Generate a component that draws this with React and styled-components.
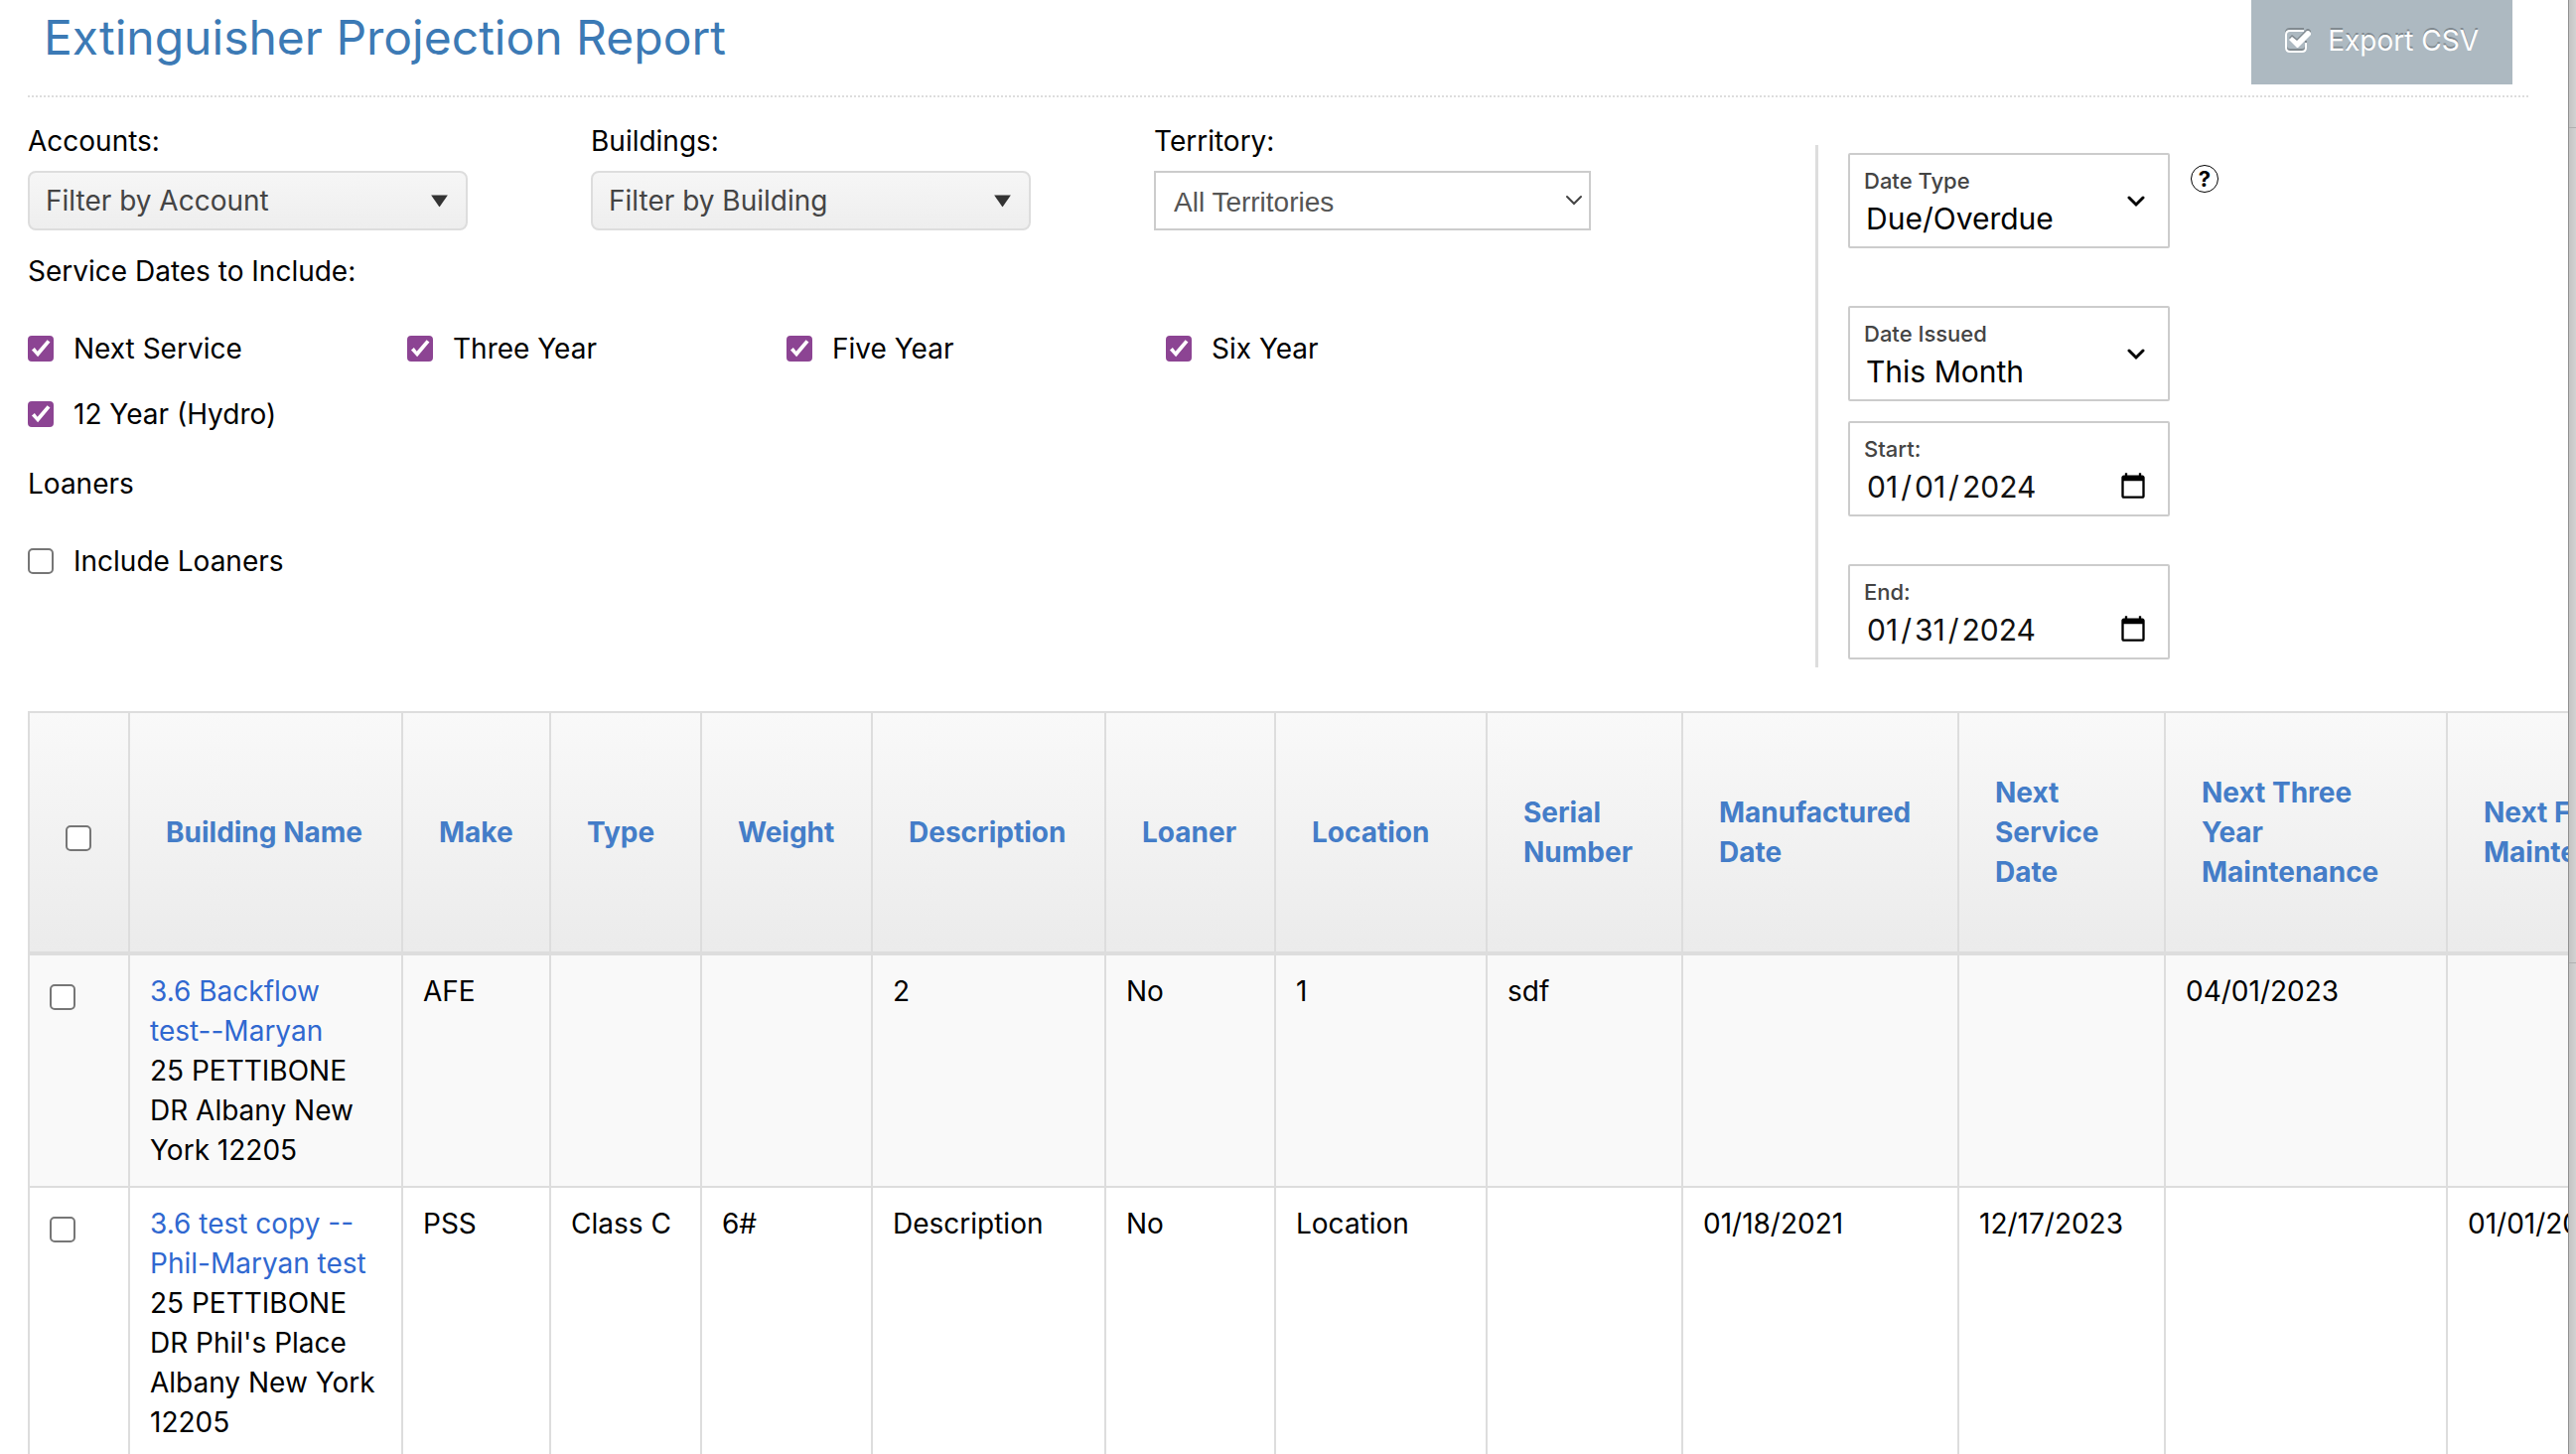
import React from "react";
import styled, { createGlobalStyle, css } from "styled-components";

const GlobalStyle = createGlobalStyle`
  *, *::before, *::after { box-sizing: border-box; }
  body {
    margin: 0;
    background: #fff;
    color: #000;
    font-family: Inter, "Liberation Sans", sans-serif;
    font-size: 28px;
    line-height: 40px;
    overflow: hidden;
  }
  button, input, select { font: inherit; color: inherit; margin: 0; }
`;

const Shell = styled.div`
  display: flex;
  min-height: 100vh;
`;

const Page = styled.main`
  flex: 1;
  min-width: 0;
  height: 100vh;
  overflow: hidden;
  padding-left: 28px;
`;

const Gutter = styled.aside`
  width: 8px;
  border-left: 1px solid #8f8f8f;
  background: linear-gradient(90deg, #c4c4c4, #d2d2d2);
`;

const GutterSection = styled.div`
  height: ${(p) => p.$height}px;
  border-bottom: 1px solid #b0b0b0;
`;

const Header = styled.header`
  display: flex;
  justify-content: space-between;
  height: 98px;
  margin-right: 40px;
  padding: 0 16px;
  border-bottom: 2px dotted #ddd;
`;

const Title = styled.h1`
  margin: 0;
  padding-top: 8px;
  font-size: 48px;
  line-height: 60px;
  font-weight: 400;
  color: #3c7ab5;
`;

const ExportButton = styled.button`
  display: flex;
  align-items: center;
  gap: 16px;
  height: 85px;
  padding: 0 34px 3px;
  border: 0;
  background: #adb9c1;
  color: #fff;
  text-shadow: 0 -2px 0 rgba(0, 0, 0, 0.25);
  svg { filter: drop-shadow(0 -2px 0 rgba(0, 0, 0, 0.25)); }
`;

const Filters = styled.section`
  display: flex;
  justify-content: space-between;
  padding: 24px 0 44px;
  margin-right: 40px;
`;

const FilterColumn = styled.div`
  flex: 1;
`;

const DropdownRow = styled.div`
  display: grid;
  grid-template-columns: 443px 443px 440px;
  column-gap: 124px;
`;

const FieldLabel = styled.label`
  display: block;
  height: 50px;
`;

const SelectWrap = styled.div`
  position: relative;
  svg {
    position: absolute;
    top: 50%;
    right: ${(p) => p.$inset}px;
    transform: translateY(-50%);
    pointer-events: none;
  }
`;

const Select = styled.select`
  appearance: none;
  display: block;
  width: 100%;
  height: 60px;
  border: 2px solid #ccc;
  background: #fff;
  padding: 4px 20px 0 18px;
  color: #555;
  font-family: "Liberation Sans", Arial, sans-serif;
  ${(p) => p.$shaded && css`
    border-color: #ddd;
    border-radius: 8px;
    background: linear-gradient(#f6f6f6, #eee);
    padding: 0 16px;
    color: #444;
    font-family: Inter, sans-serif;
  `}
`;

const GroupTitle = styled.h2`
  margin: 0;
  padding: ${(p) => p.$top}px 0 38px;
  font-size: 28px;
  line-height: 40px;
  font-weight: 400;
`;

const CheckGrid = styled.div`
  display: grid;
  grid-template-columns: repeat(4, 382px);
  row-gap: 26px;
`;

const CheckLabel = styled.label`
  display: flex;
  align-items: center;
  gap: 20px;
`;

const Checkbox = styled.input.attrs({ type: "checkbox" })`
  appearance: none;
  display: block;
  flex: none;
  width: 26px;
  height: 26px;
  border: 2px solid #767676;
  border-radius: 5px;
  background: #fff;
  &:checked {
    border-color: #8c4493;
    border-radius: 4px;
    background: #8c4493;
  }
  &:checked::before {
    content: "";
    display: block;
    width: 22px;
    height: 22px;
    background: #fff;
    clip-path: polygon(9% 57%, 22% 46%, 35% 62%, 80% 10%, 93% 20%, 37% 87%);
  }
`;

const DateColumn = styled.div`
  display: flex;
  flex-direction: column;
  flex: 0 0 718px;
  margin-top: 24px;
  padding: 8px 0 8px 30px;
  border-left: 3px solid #ddd;
`;

const DateRow = styled.div`
  display: flex;
  gap: 21px;
  margin-bottom: ${(p) => p.$gap || 0}px;
`;

const DateBox = styled.div`
  position: relative;
  width: 324px;
  height: 96px;
  padding: 10px 14px;
  border: 2px solid #ccc;
  border-radius: 2px;
  label {
    display: block;
    font-size: 22px;
    line-height: 32px;
    font-weight: 500;
    color: #444;
  }
  select, input {
    appearance: none;
    display: block;
    width: 100%;
    height: 44px;
    padding: 0 4px 0 2px;
    border: 0;
    background: transparent;
    font-size: 30px;
    line-height: 44px;
  }
  input { color: #111; }
  input::-webkit-datetime-edit-text { padding: 0 2px; }
  svg {
    position: absolute;
    top: 41px;
    right: 23px;
    pointer-events: none;
  }
`;

const Help = styled.button`
  width: 28px;
  height: 28px;
  margin-top: 12px;
  padding: 0;
  border: 1px solid #000;
  border-radius: 50%;
  background: #fff;
  font-size: 22px;
  line-height: 24px;
  font-weight: 700;
`;

const Table = styled.table`
  width: 100%;
  table-layout: fixed;
  border-collapse: collapse;
`;

const HeadRow = styled.tr`
  height: 243px;
  background: linear-gradient(#f9f9f9, #ebebeb);
`;

const HeadCell = styled.th`
  padding: 0 34px 0 36px;
  border: 2px solid #ddd;
  border-bottom-width: 4px;
  text-align: left;
  font-weight: 700;
  color: #447dc8;
  input { margin-top: 12px; }
`;

const BodyRow = styled.tr`
  background: ${(p) => (p.$striped ? "#f9f9f9" : "#fff")};
`;

const Cell = styled.td`
  padding: 16px 16px 16px 20px;
  border: 2px solid #ddd;
  vertical-align: top;
  input { margin-top: 13px; }
`;

const BuildingLink = styled.a`
  display: block;
  color: #3068d0;
  text-decoration: none;
`;

const columns = [
  ["Building Name", 275],
  ["Make", 149],
  ["Type", 152],
  ["Weight", 172],
  ["Description", 235],
  ["Loaner", 171],
  ["Location", 213],
  ["Serial Number", 197],
  ["Manufactured Date", 278],
  ["Next Service Date", 208],
  ["Next Three Year Maintenance", 284],
  ["Next Five Year Maintenance", 308],
];

const rows = [
  {
    name: "3.6 Backflow test--Maryan",
    address: "25 PETTIBONE DR Albany New York 12205",
    values: ["AFE", "", "", "2", "No", "1", "sdf", "", "", "04/01/2023", ""],
  },
  {
    name: "3.6 test copy -- Phil-Maryan test",
    address: "25 PETTIBONE DR Phil's Place Albany New York 12205",
    values: ["PSS", "Class C", "6#", "Description", "No", "Location", "", "01/18/2021", "12/17/2023", "", "01/01/2024"],
  },
];

const services = ["Next Service", "Three Year", "Five Year", "Six Year", "12 Year (Hydro)"];

const Triangle = () => (
  <svg width="17" height="13" viewBox="0 0 18 14" aria-hidden="true">
    <path d="M0 1h18L9 14z" fill="#333" />
  </svg>
);

const Chevron = ({ stroke = 3, color = "#000" }) => (
  <svg width="18" height="12" viewBox="0 0 18 12" fill="none" stroke={color} strokeWidth={stroke} aria-hidden="true">
    <path d="M2 2L9 9L16 2" strokeLinecap="round" />
  </svg>
);

const CheckSquare = () => (
  <svg width="27" height="25" viewBox="0 0 27 25" aria-hidden="true">
    <path d="M19 2H5Q1 2 1 6V19Q1 23 5 23H17Q21 23 21 19V14" fill="none" stroke="#fff" strokeWidth="2" />
    <path d="M4 11L7 8L12 12L22 2H24L26 4V6L13 19H12Z" fill="#fff" />
  </svg>
);

function Dropdown({ id, label, option, shaded }) {
  return (
    <div>
      <FieldLabel htmlFor={id}>{label}</FieldLabel>
      <SelectWrap $inset={shaded ? 20 : 8}>
        <Select id={id} $shaded={shaded}>
          <option>{option}</option>
        </Select>
        {shaded ? <Triangle /> : <Chevron stroke={2} color="#444" />}
      </SelectWrap>
    </div>
  );
}

function DateSelect({ id, label, option }) {
  return (
    <DateBox>
      <label htmlFor={id}>{label}</label>
      <select id={id}>
        <option>{option}</option>
      </select>
      <Chevron />
    </DateBox>
  );
}

function DateInput({ id, label, value }) {
  return (
    <DateBox>
      <label htmlFor={id}>{label}</label>
      <input id={id} type="date" defaultValue={value} />
    </DateBox>
  );
}

export default function App() {
  return (
    <Shell>
      <GlobalStyle />
      <Page>
        <Header>
          <Title>Extinguisher Projection Report</Title>
          <ExportButton type="button">
            <CheckSquare />
            Export CSV
          </ExportButton>
        </Header>
        <Filters>
          <FilterColumn>
            <DropdownRow>
              <Dropdown id="accounts" label="Accounts:" option="Filter by Account" shaded />
              <Dropdown id="buildings" label="Buildings:" option="Filter by Building" shaded />
              <Dropdown id="territory" label="Territory:" option="All Territories" />
            </DropdownRow>
            <GroupTitle $top={21}>Service Dates to Include:</GroupTitle>
            <CheckGrid>
              {services.map((name) => (
                <CheckLabel key={name}>
                  <Checkbox defaultChecked />
                  {name}
                </CheckLabel>
              ))}
            </CheckGrid>
            <GroupTitle $top={30}>Loaners</GroupTitle>
            <CheckLabel>
              <Checkbox />
              Include Loaners
            </CheckLabel>
          </FilterColumn>
          <DateColumn>
            <DateRow $gap={58}>
              <DateSelect id="date-type" label="Date Type" option="Due/Overdue" />
              <Help type="button">?</Help>
            </DateRow>
            <DateRow $gap={20}>
              <DateSelect id="date-issued" label="Date Issued" option="This Month" />
            </DateRow>
            <DateRow $gap={48}>
              <DateInput id="start" label="Start:" value="2024-01-01" />
            </DateRow>
            <DateRow>
              <DateInput id="end" label="End:" value="2024-01-31" />
            </DateRow>
          </DateColumn>
        </Filters>
        <Table>
          <colgroup>
            <col width="101" />
            {columns.map(([name, width]) => (
              <col key={name} width={width} />
            ))}
          </colgroup>
          <thead>
            <HeadRow>
              <HeadCell>
                <Checkbox aria-label="Select all" />
              </HeadCell>
              {columns.map(([name]) => (
                <HeadCell key={name}>{name}</HeadCell>
              ))}
            </HeadRow>
          </thead>
          <tbody>
            {rows.map((row, index) => (
              <BodyRow key={row.name} $striped={index % 2 === 0}>
                <Cell>
                  <Checkbox aria-label={row.name} />
                </Cell>
                <Cell>
                  <BuildingLink href="#">{row.name}</BuildingLink>
                  {row.address}
                </Cell>
                {row.values.map((value, i) => (
                  <Cell key={columns[i + 1][0]}>{value}</Cell>
                ))}
              </BodyRow>
            ))}
          </tbody>
        </Table>
      </Page>
      <Gutter>
        <GutterSection $height={129} />
        <GutterSection $height={841} />
      </Gutter>
    </Shell>
  );
}
